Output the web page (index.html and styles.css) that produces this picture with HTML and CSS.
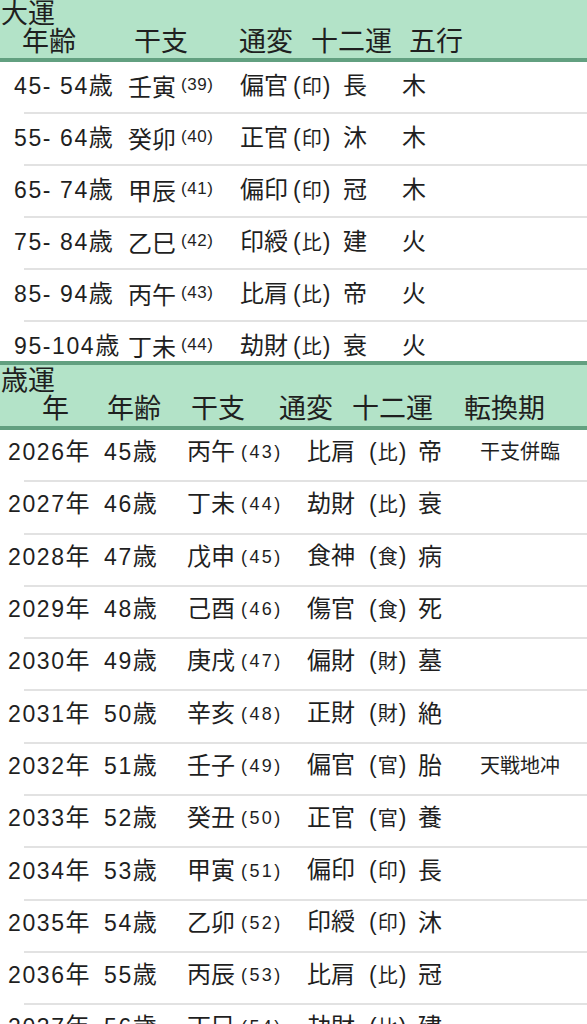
FILE: index.html
```html
<!DOCTYPE html>
<html lang="ja">
<head>
<meta charset="utf-8">
<title>大運・歳運</title>
<link rel="stylesheet" href="styles.css">
</head>
<body>
<div class="page">
  <section class="sec">
    <header class="head head-dai">
      <div class="title">大運</div>
      <div class="cols cols-dai"><span>年齢</span><span>干支</span><span>通変</span><span>十二運</span><span>五行</span></div>
    </header>
    <div class="rows rows-dai">
      <div class="row row-dai"><span class="c1"><span class="n">45- 54</span>歳</span><span>壬寅<span class="sup">(39)</span></span><span>偏官<span class="pr">(<span class="pk">印</span>)</span></span><span>長</span><span>木</span></div>
      <div class="row row-dai"><span class="c1"><span class="n">55- 64</span>歳</span><span>癸卯<span class="sup">(40)</span></span><span>正官<span class="pr">(<span class="pk">印</span>)</span></span><span>沐</span><span>木</span></div>
      <div class="row row-dai"><span class="c1"><span class="n">65- 74</span>歳</span><span>甲辰<span class="sup">(41)</span></span><span>偏印<span class="pr">(<span class="pk">印</span>)</span></span><span>冠</span><span>木</span></div>
      <div class="row row-dai"><span class="c1"><span class="n">75- 84</span>歳</span><span>乙巳<span class="sup">(42)</span></span><span>印綬<span class="pr">(<span class="pk">比</span>)</span></span><span>建</span><span>火</span></div>
      <div class="row row-dai"><span class="c1"><span class="n">85- 94</span>歳</span><span>丙午<span class="sup">(43)</span></span><span>比肩<span class="pr">(<span class="pk">比</span>)</span></span><span>帝</span><span>火</span></div>
      <div class="row row-dai"><span class="c1"><span class="n">95-104</span>歳</span><span>丁未<span class="sup">(44)</span></span><span>劫財<span class="pr">(<span class="pk">比</span>)</span></span><span>衰</span><span>火</span></div>
    </div>
  </section>
  <section class="sec">
    <header class="head head-sai">
      <div class="title">歳運</div>
      <div class="cols cols-sai"><span>年</span><span>年齢</span><span>干支</span><span>通変</span><span>十二運</span><span>転換期</span></div>
    </header>
    <div class="rows rows-sai">
      <div class="row row-sai"><span class="c1"><span class="n">2026</span>年</span><span><span class="n">45</span>歳</span><span>丙午<span class="mid">(43)</span></span><span>比肩<span class="pr pr-sai">(<span class="pk">比</span>)</span></span><span>帝</span><span class="note">干支併臨</span></div>
      <div class="row row-sai"><span class="c1"><span class="n">2027</span>年</span><span><span class="n">46</span>歳</span><span>丁未<span class="mid">(44)</span></span><span>劫財<span class="pr pr-sai">(<span class="pk">比</span>)</span></span><span>衰</span><span class="note"></span></div>
      <div class="row row-sai"><span class="c1"><span class="n">2028</span>年</span><span><span class="n">47</span>歳</span><span>戊申<span class="mid">(45)</span></span><span>食神<span class="pr pr-sai">(<span class="pk">食</span>)</span></span><span>病</span><span class="note"></span></div>
      <div class="row row-sai"><span class="c1"><span class="n">2029</span>年</span><span><span class="n">48</span>歳</span><span>己酉<span class="mid">(46)</span></span><span>傷官<span class="pr pr-sai">(<span class="pk">食</span>)</span></span><span>死</span><span class="note"></span></div>
      <div class="row row-sai"><span class="c1"><span class="n">2030</span>年</span><span><span class="n">49</span>歳</span><span>庚戌<span class="mid">(47)</span></span><span>偏財<span class="pr pr-sai">(<span class="pk">財</span>)</span></span><span>墓</span><span class="note"></span></div>
      <div class="row row-sai"><span class="c1"><span class="n">2031</span>年</span><span><span class="n">50</span>歳</span><span>辛亥<span class="mid">(48)</span></span><span>正財<span class="pr pr-sai">(<span class="pk">財</span>)</span></span><span>絶</span><span class="note"></span></div>
      <div class="row row-sai"><span class="c1"><span class="n">2032</span>年</span><span><span class="n">51</span>歳</span><span>壬子<span class="mid">(49)</span></span><span>偏官<span class="pr pr-sai">(<span class="pk">官</span>)</span></span><span>胎</span><span class="note">天戦地冲</span></div>
      <div class="row row-sai"><span class="c1"><span class="n">2033</span>年</span><span><span class="n">52</span>歳</span><span>癸丑<span class="mid">(50)</span></span><span>正官<span class="pr pr-sai">(<span class="pk">官</span>)</span></span><span>養</span><span class="note"></span></div>
      <div class="row row-sai"><span class="c1"><span class="n">2034</span>年</span><span><span class="n">53</span>歳</span><span>甲寅<span class="mid">(51)</span></span><span>偏印<span class="pr pr-sai">(<span class="pk">印</span>)</span></span><span>長</span><span class="note"></span></div>
      <div class="row row-sai"><span class="c1"><span class="n">2035</span>年</span><span><span class="n">54</span>歳</span><span>乙卯<span class="mid">(52)</span></span><span>印綬<span class="pr pr-sai">(<span class="pk">印</span>)</span></span><span>沐</span><span class="note"></span></div>
      <div class="row row-sai"><span class="c1"><span class="n">2036</span>年</span><span><span class="n">55</span>歳</span><span>丙辰<span class="mid">(53)</span></span><span>比肩<span class="pr pr-sai">(<span class="pk">比</span>)</span></span><span>冠</span><span class="note"></span></div>
      <div class="row row-sai"><span class="c1"><span class="n">2037</span>年</span><span><span class="n">56</span>歳</span><span>丁巳<span class="mid">(54)</span></span><span>劫財<span class="pr pr-sai">(<span class="pk">比</span>)</span></span><span>建</span><span class="note"></span></div>
    </div>
  </section>
</div>
</body>
</html>
```
FILE: styles.css
```css
* { box-sizing: border-box; }

body {
  margin: 0;
  background: #ffffff;
  color: #1f1f1f;
  font-family: "Liberation Sans", "Noto Sans CJK JP", sans-serif;
}

.page {
  width: 587px;
  height: 1024px;
  overflow: hidden;
}

.head {
  background: #b3e3c8;
  border-bottom: 4px solid #62a080;
}

.head-dai {
  height: 62px;
}

.head-sai {
  height: 69px;
  border-top: 4px solid #62a080;
  padding-top: 2px;
}

.title {
  font-size: 27px;
  line-height: 28px;
  padding-left: 1px;
}

.cols {
  display: grid;
  font-size: 27px;
  line-height: 28px;
  white-space: nowrap;
}

.cols-dai {
  grid-template-columns: 112px 105px 72px 98px 1fr;
  padding-left: 22px;
}

.cols-sai {
  grid-template-columns: 65px 84px 88px 73px 112px 1fr;
  padding-left: 42px;
}

.rows-dai {
  height: 299px;
  overflow: hidden;
}

.row {
  margin-left: 24px;
  border-bottom: 2px solid #e2e2e2;
  display: grid;
  align-items: center;
  font-size: 24px;
  line-height: 28px;
  white-space: nowrap;
}

.row-dai {
  height: 52px;
  padding-bottom: 2px;
  grid-template-columns: 104px 112px 103px 59px 1fr;
}

.row-dai .c1 { margin-left: -10px; }

.row-sai {
  height: 52.3px;
  padding-bottom: 6px;
  grid-template-columns: 80px 83px 120px 111px 62px 1fr;
}

.row-sai .c1 { margin-left: -16px; }

.n {
  font-size: 23px;
  letter-spacing: 1.6px;
}

.sup {
  font-size: 17px;
  letter-spacing: 0.6px;
  margin-left: 5px;
  vertical-align: 6px;
}

.mid {
  font-size: 18px;
  letter-spacing: 2.4px;
  margin-left: 6px;
  vertical-align: 2px;
}

.pr {
  font-size: 23px;
  margin-left: 5px;
}

.pr-sai {
  margin-left: 14px;
}

.pk {
  font-size: 20px;
  margin: 0 1px;
}

.note {
  font-size: 20px;
}
```
